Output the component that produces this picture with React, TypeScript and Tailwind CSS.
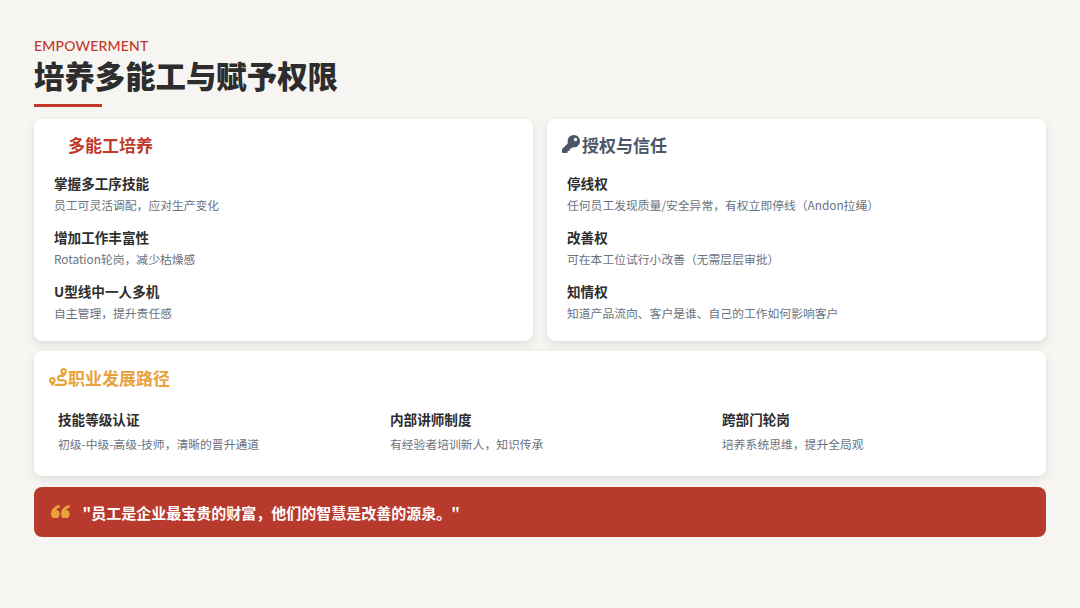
import { FaKey, FaRoute } from "react-icons/fa";

interface Item {
  title: string;
  desc: string;
}

const training: Item[] = [
  { title: "掌握多工序技能", desc: "员工可灵活调配，应对生产变化" },
  { title: "增加工作丰富性", desc: "Rotation轮岗，减少枯燥感" },
  { title: "U型线中一人多机", desc: "自主管理，提升责任感" },
];

const trust: Item[] = [
  { title: "停线权", desc: "任何员工发现质量/安全异常，有权立即停线（Andon拉绳）" },
  { title: "改善权", desc: "可在本工位试行小改善（无需层层审批）" },
  { title: "知情权", desc: "知道产品流向、客户是谁、自己的工作如何影响客户" },
];

const career: Item[] = [
  { title: "技能等级认证", desc: "初级-中级-高级-技师，清晰的晋升通道" },
  { title: "内部讲师制度", desc: "有经验者培训新人，知识传承" },
  { title: "跨部门轮岗", desc: "培养系统思维，提升全局观" },
];

function ItemList({ items }: { items: Item[] }) {
  return (
    <div className="flex flex-col gap-[12px] px-[20px]">
      {items.map((item) => (
        <div key={item.title}>
          <p className="text-[13.6px] leading-[20px] font-bold text-[#2d2d2d]">{item.title}</p>
          <p className="mt-[2px] text-[11.8px] leading-[20px] text-[#6b7280]">{item.desc}</p>
        </div>
      ))}
    </div>
  );
}

// two rounded "66" marks, the package's quote icons are too square
function QuoteMark() {
  const six = "M8.6 0v2.8C6.8 3.2 5.6 4 5.2 4.9 a4.3 4.3 0 1 1 -5.2 4.3C0 4.2 3.6 0.7 8.6 0z";
  return (
    <svg viewBox="0 0 18.6 13.6" className="h-[13.6px] w-[18.6px] shrink-0 -mt-[1px] fill-[#e8a33d]">
      <path d={six} />
      <path d={six} transform="translate(10 0)" />
    </svg>
  );
}

export default function App() {
  return (
    <div className="w-[1080px] h-[608px] overflow-hidden bg-[#f7f5f1] px-[34px] pt-[37px] font-['Noto_Sans_CJK_SC','Noto_Sans',sans-serif]">
      <p className="text-[14px] leading-[17px] font-medium tracking-[0.2px] text-[#c0392b] font-['Lato','Noto_Sans_CJK_SC',sans-serif]">EMPOWERMENT</p>
      <h1 className="text-[30.4px] leading-[42px] font-black text-[#2d2d2d]">培养多能工与赋予权限</h1>
      <div className="mt-[8px] h-[3px] w-[68px] bg-[#c0392b]" />

      <div className="mt-[12px] grid grid-cols-2 gap-[14px]">
        <div className="h-[222px] rounded-lg bg-white pt-[13px] shadow-[0_3px_8px_rgba(0,0,0,0.1)]">
          <h2 className="pl-[34px] text-[17px] leading-[26px] font-bold text-[#c0392b]">多能工培养</h2>
          <div className="mt-[15px]">
            <ItemList items={training} />
          </div>
        </div>
        <div className="h-[222px] rounded-lg bg-white pt-[13px] shadow-[0_3px_8px_rgba(0,0,0,0.1)]">
          <h2 className="flex items-center gap-[2px] pl-[15px] text-[17px] leading-[26px] font-bold text-[#4a5568]">
            <FaKey className="size-[18px] -mt-[3px]" />
            授权与信任
          </h2>
          <div className="mt-[15px]">
            <ItemList items={trust} />
          </div>
        </div>
      </div>

      <div className="mt-[10px] h-[125px] rounded-lg bg-white pt-[14px] shadow-[0_3px_8px_rgba(0,0,0,0.1)]">
        <h2 className="flex items-center gap-[1px] pl-[15px] text-[17px] leading-[26px] font-bold text-[#e8a33d]">
          <FaRoute className="size-[18px] -mt-[3px]" />
          职业发展路径
        </h2>
        <div className="mt-[18px] grid grid-cols-3 gap-[16px] px-[16px]">
          {career.map((item) => (
            <div key={item.title} className="pl-[8px]">
              <p className="text-[13.6px] leading-[20px] font-bold text-[#2d2d2d]">{item.title}</p>
              <p className="mt-[5px] text-[11.8px] leading-[20px] text-[#6b7280]">{item.desc}</p>
            </div>
          ))}
        </div>
      </div>

      <div className="mt-[11px] flex h-[50px] items-center gap-[13px] rounded-lg bg-[#b83a2c] pl-[17px]">
        <QuoteMark />
        <p className="pt-[2px] text-[15px] font-bold text-white">"员工是企业最宝贵的财富，他们的智慧是改善的源泉。"</p>
      </div>
    </div>
  );
}
